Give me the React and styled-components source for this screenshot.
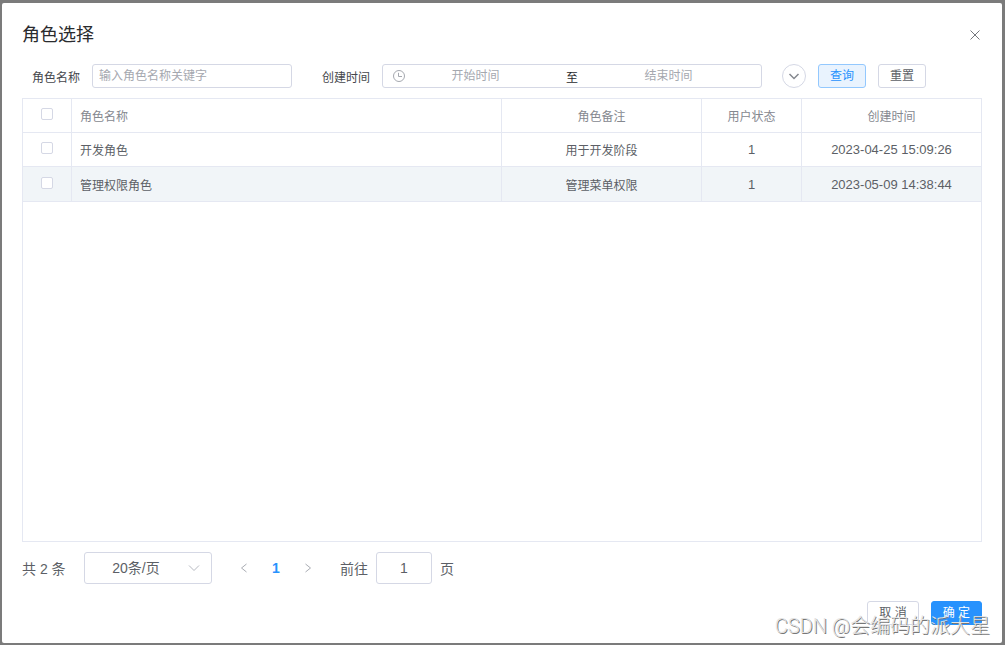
import React, { useState } from "react";
import styled, { createGlobalStyle, css, ThemeProvider } from "styled-components";

const theme = {
  colors: {
    primary: "#2792fd",
    title: "#2a2b2e",
    text: "#5c5f66",
    header: "#85888f",
    placeholder: "#a5a8af",
    border: "#d5d8e5",
    line: "#e5e8f2",
    stripe: "#f1f5f8",
  },
};

const roles = [
  { id: 1, name: "开发角色", remark: "用于开发阶段", status: 1, created: "2023-04-25 15:09:26" },
  { id: 2, name: "管理权限角色", remark: "管理菜单权限", status: 1, created: "2023-05-09 14:38:44" },
];

const Icon = ({ size, path, stroke = 1 }) => (
  <svg
    width={size}
    height={size}
    viewBox={`0 0 ${size} ${size}`}
    fill="none"
    stroke="currentColor"
    strokeWidth={stroke}
    aria-hidden="true"
  >
    <path d={path} />
  </svg>
);

const ClockIcon = () => (
  <svg width="12" height="12" viewBox="0 0 12 12" fill="none" stroke="currentColor" aria-hidden="true">
    <circle cx="6" cy="6" r="5.5" />
    <path d="M5.5 2.8V6.5H9" />
  </svg>
);

const App = () => {
  const [selected, setSelected] = useState([]);
  const [page, setPage] = useState("1");

  const toggle = (id) =>
    setSelected((prev) => (prev.includes(id) ? prev.filter((i) => i !== id) : [...prev, id]));

  const toggleAll = () =>
    setSelected(selected.length === roles.length ? [] : roles.map((r) => r.id));

  return (
    <ThemeProvider theme={theme}>
      <GlobalStyle />
      <Overlay>
        <Dialog role="dialog" aria-labelledby="dialog-title">
          <Header>
            <h1 id="dialog-title">角色选择</h1>
            <CloseButton type="button" aria-label="关闭">
              <Icon size={10} path="M0.5 0.5L9.5 9.5M9.5 0.5L0.5 9.5" />
            </CloseButton>
          </Header>

          <Filters onSubmit={(e) => e.preventDefault()}>
            <Field>
              <label htmlFor="role-name">角色名称</label>
              <TextInput id="role-name" placeholder="输入角色名称关键字" />
            </Field>
            <Field>
              <label htmlFor="start-time">创建时间</label>
              <DateRange>
                <ClockIcon />
                <input id="start-time" placeholder="开始时间" />
                <span>至</span>
                <input aria-label="结束时间" placeholder="结束时间" />
              </DateRange>
            </Field>
            <Actions>
              <RoundButton type="button" aria-label="展开">
                <Icon size={12} path="M1.5 4L6 8.5L10.5 4" stroke={1.5} />
              </RoundButton>
              <Button type="submit" $variant="plain">
                查询
              </Button>
              <Button type="reset">重置</Button>
            </Actions>
          </Filters>

          <TableBox>
            <Table>
              <colgroup>
                <col width="49" />
                <col />
                <col width="200" />
                <col width="100" />
                <col width="179" />
              </colgroup>
              <thead>
                <tr>
                  <Th>
                    <Checkbox
                      aria-label="全选"
                      checked={selected.length === roles.length}
                      onChange={toggleAll}
                    />
                  </Th>
                  <Th $left>角色名称</Th>
                  <Th>角色备注</Th>
                  <Th>用户状态</Th>
                  <Th>创建时间</Th>
                </tr>
              </thead>
              <tbody>
                {roles.map((role) => (
                  <Row key={role.id}>
                    <Td>
                      <Checkbox
                        aria-label={role.name}
                        checked={selected.includes(role.id)}
                        onChange={() => toggle(role.id)}
                      />
                    </Td>
                    <Td $left>{role.name}</Td>
                    <Td>{role.remark}</Td>
                    <Td $number>{role.status}</Td>
                    <Td $number>{role.created}</Td>
                  </Row>
                ))}
              </tbody>
            </Table>
          </TableBox>

          <Pagination aria-label="分页">
            <Total>共 2 条</Total>
            <SelectBox>
              <select aria-label="每页条数" defaultValue="20">
                <option value="10">10条/页</option>
                <option value="20">20条/页</option>
                <option value="50">50条/页</option>
              </select>
              <Icon size={12} path="M1 3.5L6 8.5L11 3.5" />
            </SelectBox>
            <Pager>
              <button type="button" aria-label="上一页">
                <Icon size={10} path="M7.5 1L2.5 5L7.5 9" />
              </button>
              <button type="button" className="active">
                1
              </button>
              <button type="button" aria-label="下一页">
                <Icon size={10} path="M2.5 1L7.5 5L2.5 9" />
              </button>
            </Pager>
            <Jumper>
              前往
              <input value={page} onChange={(e) => setPage(e.target.value)} />
              页
            </Jumper>
          </Pagination>

          <Footer>
            <Button type="button">取 消</Button>
            <Button type="button" $variant="primary">
              确 定
            </Button>
          </Footer>
        </Dialog>
        <Watermark>CSDN @会编码的派大星</Watermark>
      </Overlay>
    </ThemeProvider>
  );
};

export default App;

const GlobalStyle = createGlobalStyle`
  * {
    box-sizing: border-box;
  }
  body {
    margin: 0;
  }
  body, button, input, select {
    font-family: "Liberation Sans", "Noto Sans CJK SC", sans-serif;
    font-size: 12px;
  }
  button {
    padding: 0;
    cursor: pointer;
  }
  input::placeholder {
    color: ${theme.colors.placeholder};
    opacity: 1;
  }
`;

const Overlay = styled.div`
  position: relative;
  display: flex;
  min-height: 100vh;
  padding: 3px 3px 2px 2px;
  background: #7b7b7b;
  color: ${({ theme }) => theme.colors.text};
`;

const Dialog = styled.section`
  display: flex;
  flex: 1;
  flex-direction: column;
  min-width: 0;
  padding: 20px 20px 18px;
  border-radius: 2px;
  background: #fff;
`;

const Header = styled.header`
  display: flex;
  align-items: center;
  justify-content: space-between;
  h1 {
    margin: 0;
    font-size: 18px;
    font-weight: 400;
    line-height: 24px;
    color: ${({ theme }) => theme.colors.title};
  }
`;

const CloseButton = styled.button`
  display: flex;
  margin-right: 2px;
  border: 0;
  background: none;
  color: #74777d;
`;

const Filters = styled.form`
  display: flex;
  flex-wrap: wrap;
  gap: 10px 0;
  margin: 17px 0 10px;
  padding-left: 10px;
`;

const Field = styled.div`
  display: flex;
  align-items: center;
  gap: 12px;
  margin-right: 30px;
  & + & {
    margin-right: 20px;
  }
  label {
    color: #45474c;
  }
`;

const inputBox = css`
  height: 24px;
  border: 1px solid ${({ theme }) => theme.colors.border};
  border-radius: 3px;
  background: #fff;
`;

const TextInput = styled.input`
  ${inputBox}
  width: 200px;
  padding: 0 6px;
`;

const DateRange = styled.div`
  ${inputBox}
  display: flex;
  align-items: center;
  width: 380px;
  padding: 0 22px 0 10px;
  color: ${({ theme }) => theme.colors.placeholder};
  input {
    flex: 1;
    min-width: 0;
    padding: 0;
    border: 0;
    outline: none;
    background: none;
    text-align: center;
  }
  span {
    width: 52px;
    text-align: center;
    color: ${({ theme }) => theme.colors.title};
  }
`;

const Actions = styled.div`
  display: flex;
  gap: 12px;
`;

const RoundButton = styled.button`
  display: flex;
  align-items: center;
  justify-content: center;
  width: 24px;
  height: 24px;
  border: 1px solid ${({ theme }) => theme.colors.border};
  border-radius: 50%;
  background: #fff;
  color: #85888f;
`;

const variants = {
  plain: css`
    border-color: #93c8fe;
    background: #e9f3fe;
    color: ${({ theme }) => theme.colors.primary};
  `,
  primary: css`
    border-color: ${({ theme }) => theme.colors.primary};
    background: ${({ theme }) => theme.colors.primary};
    color: #fff;
  `,
};

const Button = styled.button`
  height: 24px;
  padding: 0 11px;
  border: 1px solid ${({ theme }) => theme.colors.border};
  border-radius: 3px;
  background: #fff;
  line-height: 20px;
  color: ${({ theme }) => theme.colors.text};
  ${({ $variant }) => variants[$variant]}
`;

const TableBox = styled.div`
  flex: 1;
  border: 1px solid ${({ theme }) => theme.colors.line};
`;

const Table = styled.table`
  width: 100%;
  table-layout: fixed;
  border-collapse: separate;
  border-spacing: 0;
`;

const cell = css`
  height: 34px;
  padding: 0 8px;
  border-right: 1px solid ${({ theme }) => theme.colors.line};
  border-bottom: 1px solid ${({ theme }) => theme.colors.line};
  font-size: ${({ $number }) => ($number ? "13px" : "12px")};
  text-align: ${({ $left }) => ($left ? "left" : "center")};
  &:last-child {
    border-right: 0;
  }
`;

const Th = styled.th`
  ${cell}
  font-weight: 400;
  color: ${({ theme }) => theme.colors.header};
`;

const Td = styled.td`
  ${cell}
`;

const Row = styled.tr`
  &:nth-child(even) {
    background: ${({ theme }) => theme.colors.stripe};
  }
  &:last-child td {
    height: 35px;
  }
`;

const Checkbox = styled.input.attrs({ type: "checkbox" })`
  display: block;
  width: 12px;
  height: 12px;
  margin: 0 auto 3px;
  appearance: none;
  border: 1px solid ${({ theme }) => theme.colors.border};
  border-radius: 2px;
  background: #fff;
  &:checked {
    border-color: ${({ theme }) => theme.colors.primary};
    background: ${({ theme }) => theme.colors.primary};
  }
`;

const Pagination = styled.nav`
  display: flex;
  align-items: center;
  gap: 16px;
  margin-top: 10px;
  font-size: 14px;
`;

const Total = styled.span`
  min-width: 46px;
`;

const SelectBox = styled.div`
  ${inputBox}
  display: grid;
  grid-template-columns: 1fr;
  align-items: center;
  width: 128px;
  height: 32px;
  color: #b6b9c1;
  select,
  svg {
    grid-area: 1 / 1;
  }
  select {
    width: 100%;
    height: 30px;
    padding: 0 34px 0 10px;
    appearance: none;
    border: 0;
    background: none;
    font-size: 14px;
    text-align-last: center;
    color: ${({ theme }) => theme.colors.text};
  }
  svg {
    justify-self: end;
    margin-right: 11px;
    pointer-events: none;
  }
`;

const Pager = styled.div`
  display: flex;
  button {
    display: flex;
    align-items: center;
    justify-content: center;
    width: 32px;
    height: 32px;
    border: 0;
    background: none;
    font-size: 14px;
    color: #a9acb3;
  }
  .active {
    font-weight: 700;
    color: ${({ theme }) => theme.colors.primary};
  }
`;

const Jumper = styled.label`
  display: flex;
  align-items: center;
  gap: 8px;
  input {
    ${inputBox}
    width: 56px;
    height: 32px;
    font-size: 14px;
    text-align: center;
    color: ${({ theme }) => theme.colors.text};
  }
`;

const Footer = styled.footer`
  display: flex;
  justify-content: flex-end;
  gap: 12px;
  margin-top: 17px;
`;

const Watermark = styled.div`
  position: absolute;
  right: 15px;
  bottom: 7px;
  font-family: Roboto, "Noto Sans CJK SC", sans-serif;
  font-size: 20px;
  font-weight: 300;
  line-height: 24px;
  color: #e4e4e4;
  text-shadow: 1px 1px 0 #777;
  pointer-events: none;
`;
